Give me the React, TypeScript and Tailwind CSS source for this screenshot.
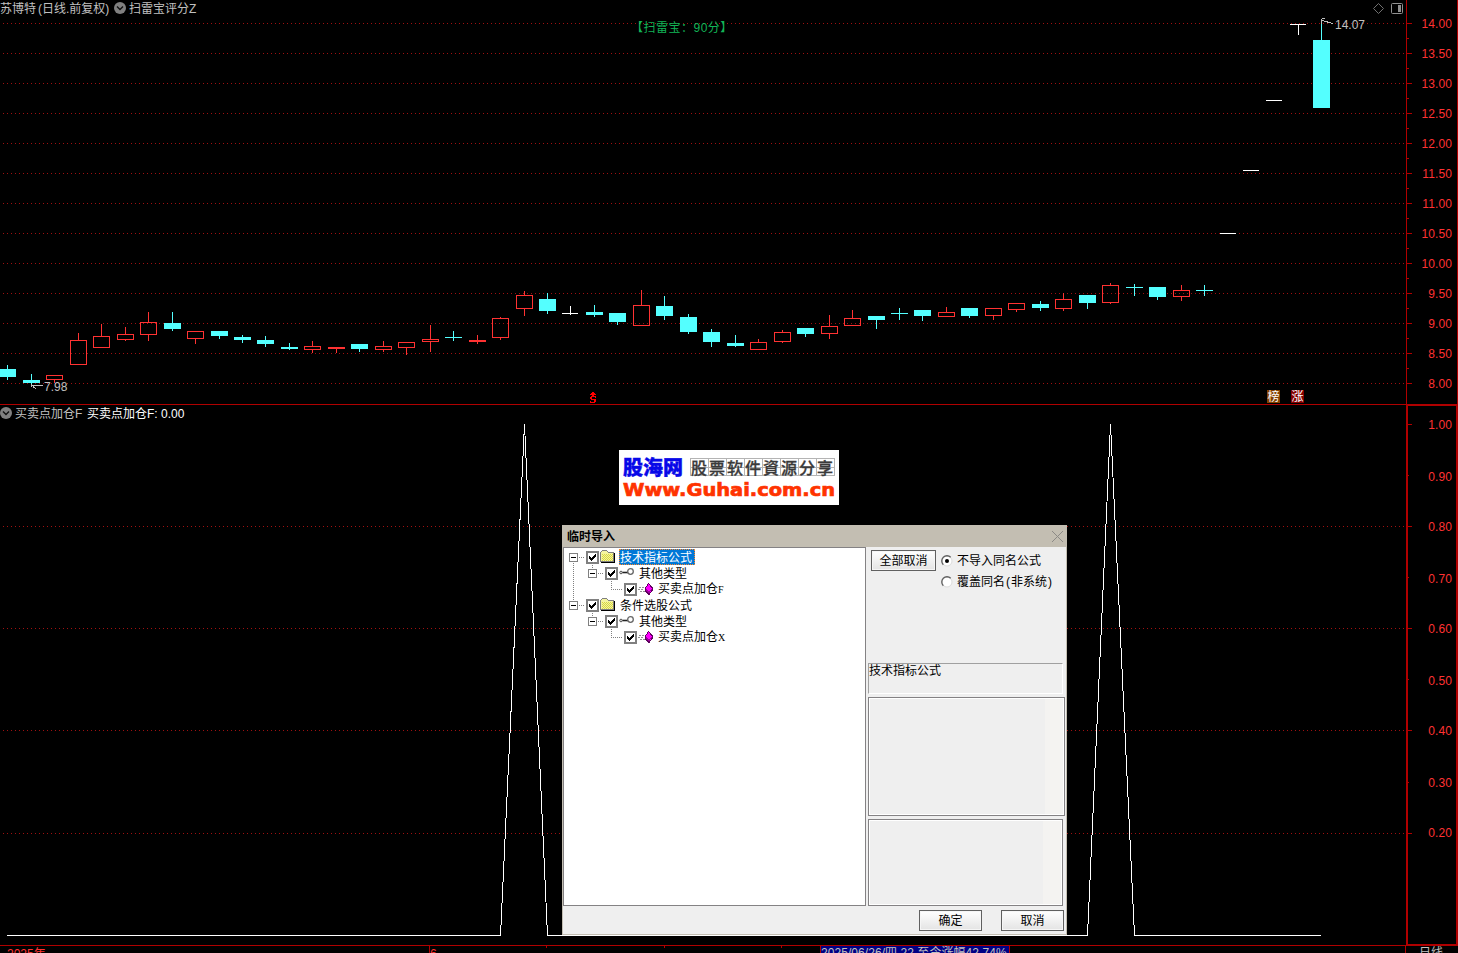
import React from 'react';

type Tone = 'up' | 'down' | 'flat';
// [centre x, body top, body bottom, wick top, wick bottom, tone]
type Candle = [number, number, number, number, number, Tone];

const CANDLES: Candle[] = [
  [7, 369, 377, 365, 380, 'down'],
  [31, 380, 383, 374, 386, 'down'],
  [54, 375, 380, 375, 383, 'up'],
  [78, 340, 365, 333, 365, 'up'],
  [101, 336, 348, 324, 348, 'up'],
  [125, 334, 340, 327, 341, 'up'],
  [148, 322, 335, 312, 341, 'up'],
  [172, 323, 329, 312, 331, 'down'],
  [195, 331, 339, 331, 344, 'up'],
  [219, 331, 336, 331, 339, 'down'],
  [242, 337, 340, 335, 343, 'down'],
  [265, 340, 344, 336, 347, 'down'],
  [289, 347, 349, 343, 350, 'down'],
  [312, 346, 350, 341, 353, 'up'],
  [336, 347, 349, 347, 353, 'up'],
  [359, 344, 349, 344, 352, 'down'],
  [383, 346, 350, 341, 352, 'up'],
  [406, 342, 348, 342, 355, 'up'],
  [430, 339, 342, 325, 352, 'up'],
  [453, 337, 338, 331, 341, 'down'],
  [477, 340, 342, 335, 344, 'up'],
  [500, 318, 338, 317, 340, 'up'],
  [524, 295, 309, 291, 316, 'up'],
  [547, 299, 311, 293, 314, 'down'],
  [570, 313, 314, 306, 315, 'flat'],
  [594, 312, 315, 305, 317, 'down'],
  [617, 313, 322, 313, 325, 'down'],
  [641, 305, 326, 290, 326, 'up'],
  [664, 306, 316, 296, 320, 'down'],
  [688, 317, 332, 314, 334, 'down'],
  [711, 332, 342, 329, 347, 'down'],
  [735, 343, 346, 335, 347, 'down'],
  [758, 342, 350, 339, 350, 'up'],
  [782, 332, 342, 330, 343, 'up'],
  [805, 328, 334, 328, 337, 'down'],
  [829, 326, 334, 315, 339, 'up'],
  [852, 318, 326, 310, 326, 'up'],
  [876, 316, 320, 316, 329, 'down'],
  [899, 313, 314, 308, 320, 'down'],
  [922, 310, 316, 310, 321, 'down'],
  [946, 312, 317, 307, 317, 'up'],
  [969, 308, 316, 308, 318, 'down'],
  [993, 308, 316, 308, 320, 'up'],
  [1016, 303, 310, 303, 312, 'up'],
  [1040, 304, 308, 301, 311, 'down'],
  [1063, 299, 309, 293, 311, 'up'],
  [1087, 295, 303, 295, 309, 'down'],
  [1110, 285, 303, 283, 304, 'up'],
  [1134, 287, 288, 284, 296, 'down'],
  [1157, 287, 297, 287, 300, 'down'],
  [1181, 290, 297, 285, 301, 'up'],
  [1204, 290, 291, 285, 296, 'down'],
  [1228, 233, 234, 233, 234, 'flat'],
  [1251, 170, 171, 170, 171, 'flat'],
  [1274, 100, 101, 100, 101, 'flat'],
  [1298, 24, 25, 24, 35, 'flat'],
  [1321, 40, 108, 20, 108, 'down'],
];

const COLORS: Record<Tone, string> = { up: '#ff3232', down: '#54ffff', flat: '#ffffff' };

const PRICES = ['14.00', '13.50', '13.00', '12.50', '12.00', '11.50', '11.00', '10.50', '10.00', '9.50', '9.00', '8.50', '8.00'];
const LEVELS = ['1.00', '0.90', '0.80', '0.70', '0.60', '0.50', '0.40', '0.30', '0.20'];

function CandleShape({ c }: { c: Candle }) {
  const [x, top, bottom, high, low, tone] = c;
  const color = COLORS[tone];
  const flat = tone === 'flat';
  const hollow = tone === 'up' && bottom - top > 2;
  return (
    <g fill={color}>
      {hollow ? (
        <>
          <rect x={x} y={high} width={1} height={top - high} />
          <rect x={x} y={bottom} width={1} height={low - bottom} />
          <rect x={x - 7.5} y={top + 0.5} width={16} height={bottom - top - 1} fill="none" stroke={color} />
        </>
      ) : (
        <>
          <rect x={x} y={high} width={1} height={low - high} />
          <rect x={x - 8} y={top} width={flat ? 16 : 17} height={bottom - top} />
        </>
      )}
    </g>
  );
}

function DottedRows({ ys }: { ys: number[] }) {
  return (
    <g stroke="#a01010" strokeDasharray="1 3">
      {ys.map((y) => (
        <line key={y} x1={3} x2={1405} y1={y + 0.5} y2={y + 0.5} />
      ))}
    </g>
  );
}

function Chevron() {
  return (
    <svg width="12" height="12" viewBox="0 0 12 12" className="shrink-0">
      <circle cx="6" cy="6" r="6" fill="#808080" />
      <path d="M3 4.500 L6 7.500 L9 4.500" fill="none" stroke="#111" strokeWidth="1.4" />
    </svg>
  );
}

function PriceChart() {
  return (
    <div className="relative h-[404px] w-[1406px]">
      <svg width="1406" height="404" shapeRendering="crispEdges" className="absolute inset-0">
        <DottedRows ys={PRICES.map((_, i) => 23 + i * 30)} />
        {CANDLES.map((c) => (
          <CandleShape key={c[0]} c={c} />
        ))}
        <g stroke="#c0c0c0" fill="none">
          <path d="M32 385.5 H43 M31.5 384 V387 M33 386.5 L36 389" />
          <path d="M1322 20.5 L1333 23.5 M1321.5 19 V24 M1322 18.5 H1325" />
        </g>
        <g fill="#ff0000">
          <path d="M592 392 H594 V393 H595 V394 H596 V395 H590 V394 H591 V393 H592 Z" />
          <path d="M592 395 H594 V396 H596 V398 H595 V397 H592 V398.500 H595 V399 H596 V402 H595 V403 H590 V401 H591 V402 H594 V400 H591 V399 H590 V397 H591 V396 H592 Z" />
        </g>
      </svg>
      <div className="relative flex h-4 items-center text-[#c0c0c0]">
        <span className="w-[114px] whitespace-nowrap pt-px">
          苏博特<span className="ml-[2px]">(日线</span>.前复权<span>)</span>
        </span>
        <Chevron />
        <span className="ml-[3px] pt-px">扫雷宝评分Z</span>
        <svg width="32" height="12" className="ml-auto mr-[2px]">
          <path d="M6.500 1.500 L11.500 6.500 L6.500 11.500 L1.500 6.500 Z" fill="none" stroke="#707070" />
          <rect x="19.500" y="1.500" width="11" height="10" rx="1" fill="none" stroke="#909090" />
          <rect x="26" y="3" width="3" height="7" fill="#909090" />
        </svg>
      </div>
      <span className="absolute left-[631px] top-[20px] whitespace-nowrap tracking-[0.5px] text-[#12b457]">【扫雷宝：90分】</span>
      <span className="absolute left-[44px] top-[379px] text-[#c0c0c0]">7.98</span>
      <span className="absolute left-[1335px] top-[17px] text-[#c0c0c0]">14.07</span>
      <span className="absolute left-[1267px] top-[390px] flex h-[13px] w-[13px] items-center justify-center bg-[#844100] pt-px text-[12px] leading-none text-white">榜</span>
      <span className="absolute left-[1291px] top-[390px] flex h-[13px] w-[13px] items-center justify-center bg-[#840000] pt-px text-[12px] leading-none text-white">涨</span>
    </div>
  );
}

function PriceAxis() {
  return (
    <div className="relative h-[404px] w-[52px] border-x border-[#b00000] pr-[5px] pt-[9px] text-right text-[#ff3232]">
      <svg width="6" height="404" shapeRendering="crispEdges" className="absolute left-0 top-0">
        {PRICES.map((p, i) => (
          <g key={p} fill="#b00000">
            <rect x="0" y={23 + i * 30} width="5" height="1" />
            {i < 12 && <rect x="0" y={38 + i * 30} width="2" height="1" />}
          </g>
        ))}
      </svg>
      {PRICES.map((p) => (
        <div key={p} className="h-[30px] leading-[30px] tracking-[0.1px]">{p}</div>
      ))}
    </div>
  );
}

function SignalChart() {
  return (
    <div className="relative h-[540px] w-[1406px]">
      <svg width="1406" height="540" viewBox="0 405 1406 540" shapeRendering="crispEdges" className="absolute inset-0">
        <DottedRows ys={[526, 628, 730, 833]} />
        <polyline
          points="7,935.5 500.5,935.5 524.5,424 547.500,935.5 1087.5,935.5 1110.5,424 1134.5,935.5 1321,935.5"
          fill="none"
          stroke="#ffffff"
        />
      </svg>
      <div className="relative flex h-4 items-center text-[#c0c0c0]">
        <Chevron />
        <span className="ml-[3px] w-[72px] pt-px">买卖点加仓F</span>
        <span className="pt-px text-white">买卖点加仓F: 0.00</span>
      </div>
    </div>
  );
}

function SignalAxis() {
  const ticks = [424, 475, 526, 577, 628, 679, 730, 782, 833];
  return (
    <div className="relative -mt-px h-[542px] w-[52px] border-2 border-[#b00000] text-right text-[#ff3232]">
      <svg width="5" height="538" viewBox="0 406 5 538" shapeRendering="crispEdges" className="absolute left-0 top-0">
        {ticks.map((y, i) => (
          <rect key={y} x="0" y={y} width={i % 2 ? 1 : 4} height="1" fill="#b00000" />
        ))}
      </svg>
      <div className="-mt-[6px] pr-[4px] tracking-[0.1px]">
        {LEVELS.map((l) => (
          <div key={l} className="h-[51px] odd:leading-[51px] even:leading-[53px]">{l}</div>
        ))}
      </div>
    </div>
  );
}

function TimeBar() {
  return (
    <div className="flex h-2 overflow-hidden border-t border-[#b00000] leading-[16px]">
      <div className="flex h-4 w-[1406px] shrink-0 border-r border-[#b00000]">
        <span className="w-[429px] pl-[7px] text-[#ff3232]">2025年</span>
        <span className="w-[117px] border-l border-[#b00000] text-[#ff3232]">6</span>
        <span className="h-[2px] w-[118px] border-l border-[#b00000]" />
        <span className="h-[2px] w-[117px] border-l border-[#b00000]" />
        <span className="h-[2px] w-[39px] border-l border-[#b00000]" />
        <span className="w-[190px] whitespace-nowrap border-x border-[#b00000] bg-[#000084] leading-[14px] tracking-[0.06px] text-[#c0c0c0]">2025/06/26/四 22 至今涨幅42.74%</span>
      </div>
      <span className="pl-[13px] leading-[14px] text-[#c0c0c0]">日线</span>
    </div>
  );
}

function Logo() {
  return (
    <div className="absolute left-[619px] top-[450px] h-[55px] w-[220px] bg-white">
      <svg width="220" height="55">
        <g stroke="#b4b4b4" fill="none" strokeWidth="1" shapeRendering="crispEdges">
          <path d="M71.500 8.500 H215 V25.500 H71.500 Z M71.500 17.500 H215" />
          <path d="M89.500 8 V26 M107.500 8 V26 M125.500 8 V26 M143.500 8 V26 M161.500 8 V26 M179.500 8 V26 M197.500 8 V26" />
        </g>
        <text x="4" y="25" fontSize="20" fontWeight="900" fill="#0808e8" stroke="#0808e8" strokeWidth="0.400" textLength="60">股海网</text>
        <text x="72" y="23.500" fontSize="16" fontWeight="500" fill="#3a3a3a" stroke="#3a3a3a" strokeWidth="0.300" textLength="142">股票软件資源分享</text>
        <text x="4" y="45.500" fontSize="18" fontWeight="700" fontFamily="DejaVu Sans" fill="#ff3300" stroke="#ff3300" strokeWidth="0.700" textLength="212" lengthAdjust="spacingAndGlyphs">Www.Guhai.com.cn</text>
      </svg>
    </div>
  );
}

function Expander({ x }: { x: number }) {
  return (
    <>
      <rect x={x + 0.5} y="4.5" width="8" height="8" fill="#fff" stroke="#808080" />
      <line x1={x + 2} x2={x + 7} y1="8.5" y2="8.5" stroke="#000" />
    </>
  );
}

function FolderIcon() {
  return (
    <svg width="16" height="16" shapeRendering="crispEdges">
      <path d="M0.500 3.500 L2.500 1.500 H6.500 L8.500 3.500 H13.500 V12.500 H0.500 Z" fill="#f4f4a0" stroke="#808080" />
      <g stroke="#d8d840" strokeDasharray="1 1">
        <path d="M2 5.500 H13 M3 6.500 H13 M2 7.500 H13 M3 8.500 H13 M2 9.500 H13 M3 10.500 H13 M2 11.500 H13" />
      </g>
      <path d="M1 13.500 H14.500 V4" fill="none" stroke="#000" />
    </svg>
  );
}

function KeyIcon() {
  return (
    <svg width="16" height="16">
      <circle cx="2" cy="7.500" r="1.300" fill="#ddd" stroke="#555" />
      <path d="M3.500 7.500 H9" stroke="#222" strokeWidth="1.600" />
      <circle cx="11.500" cy="6.500" r="2.800" fill="#fff" stroke="#666" strokeWidth="1.300" />
    </svg>
  );
}

function GemIcon() {
  return (
    <svg width="16" height="16" shapeRendering="crispEdges">
      <path d="M1 6.500 H6 M0 8.500 H5 M2 10.500 H7" stroke="#909090" strokeDasharray="2 1" />
      <path d="M10.500 2.500 L14.500 7 V9 L11 13.500 L7.500 10 V7 Z" fill="#ff00ff" stroke="#600060" />
      <path d="M8 8.500 L11 11.500 L14 8" fill="none" stroke="#a000a0" />
    </svg>
  );
}

function TreeRow({ level, label, suffix, selected, linked }: { level: 0 | 1 | 2; label: string; suffix?: string; selected?: boolean; linked?: boolean }) {
  const lead = 22 + level * 19;
  const box = 5 + level * 19;
  const parentX = 9 + level * 19;
  return (
    <div className="flex h-4 items-center">
      <svg width={lead} height="16" shapeRendering="crispEdges" className="shrink-0">
        <g stroke="#808080" strokeDasharray="1 1">
          {linked && <line x1="9.500" x2="9.500" y1={level === 0 ? 12 : 0} y2="16" />}
          {level === 0 && !linked && <line x1="9.500" x2="9.500" y1="0" y2="4" />}
          {level > 0 && <line x1={parentX + 0.5} x2={parentX + 0.5} y1="0" y2="8" />}
          <line x1={parentX} x2={lead - 1} y1="8.500" y2="8.500" />
        </g>
        {level < 2 && <Expander x={box} />}
      </svg>
      <svg width="13" height="13" shapeRendering="crispEdges" className="mt-px shrink-0">
        <rect x="1" y="1" width="11" height="11" fill="#fff" stroke="#808080" strokeWidth="2" />
        <path d="M3 5 V8 L5 10 L10 5 V3 L5 7 Z" fill="#000" />
      </svg>
      <span className="ml-px flex w-5 shrink-0">
        {level === 0 && <FolderIcon />}
        {level === 1 && <KeyIcon />}
        {level === 2 && <GemIcon />}
      </span>
      <span
        className={
          selected
            ? '-ml-px h-4 w-[76px] whitespace-nowrap border border-dotted border-[#ff8728] bg-[#0078d7] leading-4 text-white'
            : 'whitespace-nowrap pt-px leading-4'
        }
      >
        {label}
        {suffix && <span className="font-['Liberation_Serif'] text-[10px]">{suffix}</span>}
      </span>
    </div>
  );
}

function Button({ children, className }: { children: string; className: string }) {
  return (
    <button className={'flex h-[21px] items-center justify-center border border-[#606060] bg-linear-to-b from-white to-[#e4e4e4] shadow-[inset_0_0_0_1px_#f6f6f6] ' + className}>
      {children}
    </button>
  );
}

function Radio({ label, note, checked }: { label: string; note?: string; checked?: boolean }) {
  return (
    <div className="flex h-[21px] items-center whitespace-nowrap">
      <svg width="12" height="12" className="mr-[4px]">
        <circle cx="6" cy="6" r="5" fill="#fff" stroke="#dcdcdc" />
        <path d="M2.300 9.700 A5 5 0 0 1 9.700 2.300" fill="none" stroke="#606060" strokeWidth="1.300" />
        {checked && <circle cx="6" cy="6" r="2" fill="#000" />}
      </svg>
      {label}
      {note && (
        <>
          <span className="w-[6px] text-center">(</span>
          {note}
          <span className="w-[6px] text-center">)</span>
        </>
      )}
    </div>
  );
}

function ImportDialog() {
  return (
    <div className="absolute left-[562px] top-[525px] flex h-[411px] w-[505px] flex-col border-b border-white bg-[#efefef] text-black">
      <div className="flex h-[22px] shrink-0 items-center justify-between bg-[#c3beb2] pl-[5px] pr-[3px]">
        <b className="pt-px font-bold">临时导入</b>
        <svg width="13" height="13">
          <path d="M1 1 L12 12 M12 1 L1 12" stroke="#8c8a86" />
        </svg>
      </div>
      <div className="flex h-[388px] flex-col border-x border-b border-[#c3beb2]">
        <div className="flex h-[359px]">
          <div className="w-[303px] shrink-0 border border-[#848284] bg-white pt-px">
            <TreeRow level={0} label="技术指标公式" selected linked />
            <TreeRow level={1} label="其他类型" linked />
            <TreeRow level={2} label="买卖点加仓" suffix="F" linked />
            <TreeRow level={0} label="条件选股公式" />
            <TreeRow level={1} label="其他类型" />
            <TreeRow level={2} label="买卖点加仓" suffix="X" />
          </div>
          <div className="ml-[2px] flex w-[197px] flex-col">
            <div className="flex h-[116px] pl-[3px] pt-[3px]">
              <Button className="w-[65px]">全部取消</Button>
              <div className="ml-[5px]">
                <Radio label="不导入同名公式" checked />
                <Radio label="覆盖同名" note="非系统" />
              </div>
            </div>
            <div className="h-[31px] w-[195px] border border-b-white border-l-[#a0a0a0] border-r-white border-t-[#a0a0a0] leading-[14px]">技术指标公式</div>
            <div className="mt-[3px] h-[119px] w-[197px] border border-[#848284] p-px">
              <div className="h-full border-r-[18px] border-[#f4f3f1] shadow-[0_0_0_1px_#fff]" />
            </div>
            <div className="mt-[3px] h-[87px] w-[195px] border border-[#848284] p-px">
              <div className="h-full border-r-[18px] border-[#f4f3f1] shadow-[0_0_0_1px_#fff]" />
            </div>
          </div>
        </div>
        <div className="flex justify-end gap-[19px] pr-[2px] pt-[4px]">
          <Button className="w-[63px]">确定</Button>
          <Button className="w-[63px]">取消</Button>
        </div>
      </div>
    </div>
  );
}

export default function App() {
  return (
    <div className="relative flex h-[953px] w-[1458px] flex-col overflow-hidden bg-black font-['Liberation_Sans','Noto_Sans_CJK_SC',sans-serif] text-[12px] leading-4">
      <div className="flex h-[405px] shrink-0 border-b border-[#b00000]">
        <PriceChart />
        <PriceAxis />
      </div>
      <div className="flex h-[540px] shrink-0">
        <SignalChart />
        <SignalAxis />
      </div>
      <TimeBar />
      <Logo />
      <ImportDialog />
    </div>
  );
}
